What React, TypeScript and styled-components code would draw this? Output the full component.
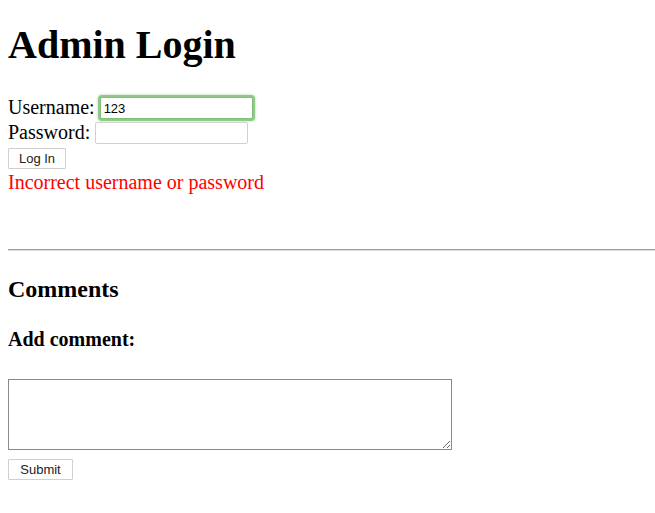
import React from "react";
import styled, { createGlobalStyle } from "styled-components";

const Global = createGlobalStyle`
  html, body { margin: 0; padding: 0; background: #fff; }
  body { font-family: "Liberation Serif", "Times New Roman", serif; color: #000; }
`;

const Page = styled.div`
  display: flex;
  flex-direction: column;
  padding: 0 0 0 8px;
`;

const Title = styled.h1`
  margin: 22px 0 0;
  font-size: 40px;
  line-height: 46px;
  font-weight: bold;
`;

const LoginForm = styled.form`
  display: flex;
  flex-direction: column;
  margin-top: 29px;
`;

const Row = styled.div`
  display: flex;
  align-items: center;
  gap: 5px;
  height: 22px;
  margin-bottom: 3px;
`;

const Label = styled.label`
  font-size: 20px;
  line-height: 22px;
  position: relative;
  top: -1px;
`;

const TextInput = styled.input<{ $focused?: boolean }>`
  box-sizing: border-box;
  width: 153px;
  height: 22px;
  margin: 0;
  padding: 1px 3px;
  font-family: "Liberation Sans", Arial, sans-serif;
  font-size: 13px;
  color: #000;
  background: #fff;
  border: 1px solid ${(p) => (p.$focused ? "#7fc07a" : "#d0d0d0")};
  border-radius: 2px;
  outline: none;
  box-shadow: ${(p) =>
    p.$focused ? "0 0 0 2px rgba(120,190,110,0.75), 0 0 2px 3px rgba(140,200,130,0.35)" : "none"};
`;

const Button = styled.button<{ $w: number; $top?: number }>`
  box-sizing: border-box;
  width: ${(p) => p.$w}px;
  height: 21px;
  padding: 0;
  margin: ${(p) => p.$top ?? 0}px 0 0;
  font-family: "Liberation Sans", Arial, sans-serif;
  font-size: 13px;
  color: #222;
  background: #fff;
  border: 1px solid #cfcfcf;
  border-radius: 1px;
`;

const Error = styled.div`
  color: #ff0000;
  font-size: 20px;
  line-height: 22px;
  margin-top: 2px;
`;

const Rule = styled.hr`
  margin: 56px 0 0;
  height: 0;
  border: none;
  border-top: 1px solid #a0a0a0;
  border-bottom: 1px solid #dcdcdc;
`;

const SubTitle = styled.h2`
  margin: 24px 0 0;
  font-size: 24px;
  line-height: 28px;
  font-weight: bold;
`;

const SmallTitle = styled.h3`
  margin: 25px 0 0;
  font-size: 20px;
  line-height: 23px;
  font-weight: bold;
`;

const CommentForm = styled.form`
  display: flex;
  flex-direction: column;
  align-items: flex-start;
  margin-top: 28px;
  gap: 9px;
`;

const TextArea = styled.textarea`
  box-sizing: border-box;
  width: 444px;
  height: 71px;
  margin: 0;
  border: 1px solid #8a8a8a;
  border-radius: 0;
  resize: both;
  font-family: "Liberation Mono", monospace;
  font-size: 13px;
`;

export default function App() {
  return (
    <>
      <Global />
      <Page>
        <Title>Admin Login</Title>
        <LoginForm onSubmit={(e) => e.preventDefault()}>
          <Row>
            <Label>Username:</Label>
            <TextInput $focused defaultValue="123" />
          </Row>
          <Row>
            <Label>Password:</Label>
            <TextInput type="password" />
          </Row>
          <Button $w={58} $top={1} type="submit">Log In</Button>
          <Error>Incorrect username or password</Error>
        </LoginForm>
        <Rule />
        <SubTitle>Comments</SubTitle>
        <SmallTitle>Add comment:</SmallTitle>
        <CommentForm onSubmit={(e) => e.preventDefault()}>
          <TextArea />
          <Button $w={65} type="submit">Submit</Button>
        </CommentForm>
      </Page>
    </>
  );
}
